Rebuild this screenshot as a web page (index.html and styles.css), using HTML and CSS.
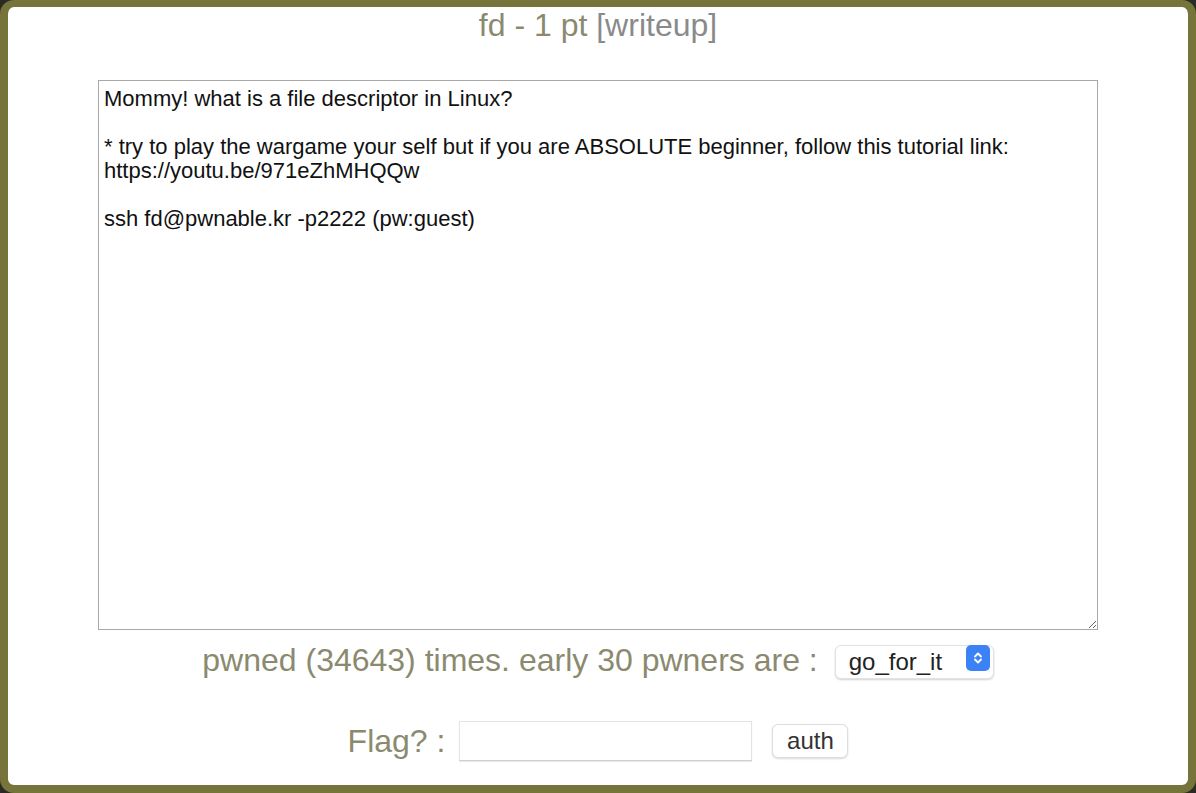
FILE: index.html
```html
<!DOCTYPE html>
<html lang="en">
<head>
  <meta charset="UTF-8">
  <title>fd - 1 pt</title>
  <link rel="stylesheet" href="styles.css">
</head>
<body>
<div class="dialog">
  <h2 class="title">fd - 1 pt <a class="writeup" href="#">[writeup]</a></h2>
  <textarea class="desc" readonly>Mommy! what is a file descriptor in Linux?

* try to play the wargame your self but if you are ABSOLUTE beginner, follow this tutorial link:
https://youtu.be/971eZhMHQQw

ssh fd@pwnable.kr -p2222 (pw:guest)</textarea>
  <div class="stats">
    <span>pwned (34643) times. early 30 pwners are :</span>
    <span class="picker">
      <select class="pwners">
        <option>go_for_it</option>
      </select>
      <span class="stepper">
        <svg width="10" height="14" viewBox="0 0 10 14"><path d="M2 5.5 5 2.5 8 5.5M2 8.5 5 11.5 8 8.5" fill="none" stroke="#fff" stroke-width="1.8" stroke-linecap="round" stroke-linejoin="round"/></svg>
      </span>
    </span>
  </div>
  <form class="auth-form">
    <label for="flag">Flag? :</label>
    <input type="text" id="flag" name="flag">
    <input type="submit" value="auth">
  </form>
</div>
</body>
</html>
```

FILE: styles.css
```css
html, body {
  margin: 0;
  height: 100%;
}
body {
  background: #2b2b24;
  font-family: "Liberation Sans", Arial, sans-serif;
}
.dialog {
  box-sizing: border-box;
  height: 100%;
  background: #fff;
  border: 8px solid #77743b;
  border-top-width: 7px;
  border-radius: 14px;
  display: flex;
  flex-direction: column;
  align-items: center;
}
.title {
  margin: 0;
  font-size: 32px;
  line-height: 36px;
  font-weight: normal;
  color: #8b8a6f;
}
.writeup {
  color: #8a8a8a;
  text-decoration: none;
}
.desc {
  box-sizing: border-box;
  width: 1000px;
  height: 550px;
  margin-top: 37px;
  padding: 6px 5px;
  border: 1px solid #a9a9a9;
  font-family: "Liberation Sans", Arial, sans-serif;
  font-size: 22px;
  line-height: 24px;
  color: #111;
  resize: both;
  outline: none;
}
.stats {
  margin-top: 13px;
  height: 34px;
  display: flex;
  align-items: center;
  gap: 17px;
  font-size: 32px;
  color: #8b8a6f;
}
.picker {
  position: relative;
  display: inline-block;
}
.pwners {
  -webkit-appearance: none;
  appearance: none;
  width: 159px;
  height: 34px;
  padding: 0 0 0 13px;
  border: 1px solid #e2e2e2;
  border-radius: 6px;
  background: #fff;
  box-shadow: 0 1px 2px rgba(0,0,0,0.18);
  font-family: "Liberation Sans", Arial, sans-serif;
  font-size: 24px;
  color: #222;
}
.stepper {
  position: absolute;
  right: 4px;
  top: 4px;
  width: 24px;
  height: 26px;
  border-radius: 5px;
  background: #3b82f6;
  display: flex;
  align-items: center;
  justify-content: center;
}
.auth-form {
  margin-top: 44px;
  display: flex;
  align-items: center;
  font-size: 32px;
  color: #8b8a6f;
}
.auth-form label {
  margin-right: 14px;
}
input[type="text"] {
  box-sizing: border-box;
  width: 293px;
  height: 40px;
  border: 1px solid #e4e4e4;
  border-bottom-color: #cfcfcf;
  box-shadow: 0 1px 1px rgba(0,0,0,0.08);
  outline: none;
}
input[type="submit"] {
  box-sizing: border-box;
  margin-left: 20px;
  width: 76px;
  height: 34px;
  border: 1px solid #dedede;
  border-radius: 6px;
  background: #fff;
  box-shadow: 0 1px 2px rgba(0,0,0,0.15);
  font-family: "Liberation Sans", Arial, sans-serif;
  font-size: 24px;
  color: #333;
}
```
